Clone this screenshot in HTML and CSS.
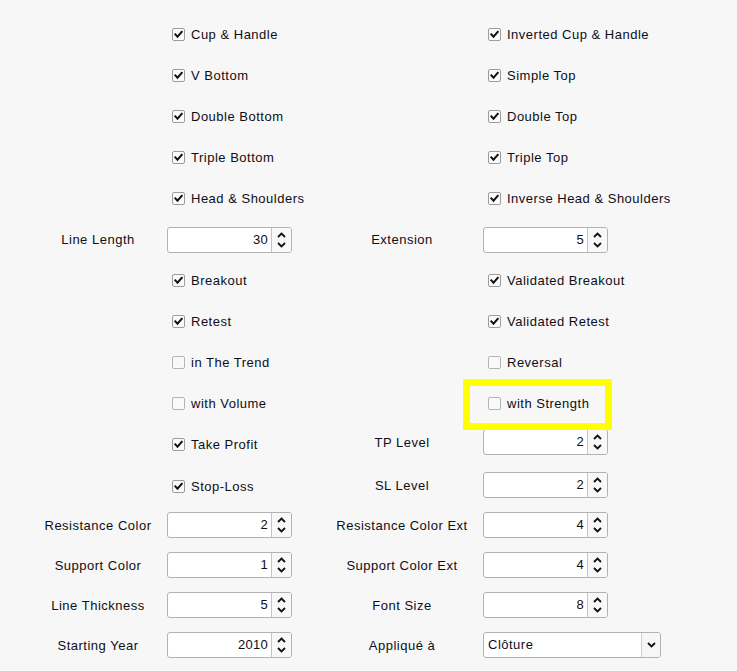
FILE: index.html
```html
<!DOCTYPE html>
<html lang="fr">
<head>
<meta charset="utf-8">
<title>Pattern settings</title>
<link rel="stylesheet" href="styles.css">
</head>
<body>
<svg width="0" height="0" class="defs">
  <defs>
    <symbol id="chk" viewBox="0 0 13 13"><path d="M2.8 6.4 L5.3 9.1 L10.3 3.4" fill="none" stroke="#111" stroke-width="2.4" stroke-linecap="square"/></symbol>
    <symbol id="up" viewBox="0 0 9 6"><path d="M1 5 L4.5 1.5 L8 5" fill="none" stroke="#111" stroke-width="1.8"/></symbol>
    <symbol id="down" viewBox="0 0 9 6"><path d="M1 1 L4.5 4.5 L8 1" fill="none" stroke="#111" stroke-width="1.8"/></symbol>
  </defs>
</svg>
<div class="form">
  <span></span><label class="cb"><span class="box"><svg><use href="#chk"/></svg></span>Cup &amp; Handle</label>
  <span></span><label class="cb"><span class="box"><svg><use href="#chk"/></svg></span>Inverted Cup &amp; Handle</label>

  <span></span><label class="cb"><span class="box"><svg><use href="#chk"/></svg></span>V Bottom</label>
  <span></span><label class="cb"><span class="box"><svg><use href="#chk"/></svg></span>Simple Top</label>

  <span></span><label class="cb"><span class="box"><svg><use href="#chk"/></svg></span>Double Bottom</label>
  <span></span><label class="cb"><span class="box"><svg><use href="#chk"/></svg></span>Double Top</label>

  <span></span><label class="cb"><span class="box"><svg><use href="#chk"/></svg></span>Triple Bottom</label>
  <span></span><label class="cb"><span class="box"><svg><use href="#chk"/></svg></span>Triple Top</label>

  <span></span><label class="cb"><span class="box"><svg><use href="#chk"/></svg></span>Head &amp; Shoulders</label>
  <span></span><label class="cb"><span class="box"><svg><use href="#chk"/></svg></span>Inverse Head &amp; Shoulders</label>

  <span class="lbl">Line Length</span>
  <div class="spin"><span class="val">30</span><span class="btns"><svg><use href="#up"/></svg><svg><use href="#down"/></svg></span></div>
  <span class="lbl">Extension</span>
  <div class="spin"><span class="val">5</span><span class="btns"><svg><use href="#up"/></svg><svg><use href="#down"/></svg></span></div>

  <span></span><label class="cb"><span class="box"><svg><use href="#chk"/></svg></span>Breakout</label>
  <span></span><label class="cb"><span class="box"><svg><use href="#chk"/></svg></span>Validated Breakout</label>

  <span></span><label class="cb"><span class="box"><svg><use href="#chk"/></svg></span>Retest</label>
  <span></span><label class="cb"><span class="box"><svg><use href="#chk"/></svg></span>Validated Retest</label>

  <span></span><label class="cb"><span class="box off"></span>in The Trend</label>
  <span></span><label class="cb"><span class="box off"></span>Reversal</label>

  <span></span><label class="cb"><span class="box off"></span>with Volume</label>
  <span></span><label class="cb hl"><span class="box off"></span>with Strength</label>

  <span></span><label class="cb"><span class="box"><svg><use href="#chk"/></svg></span>Take Profit</label>
  <span class="lbl raise">TP Level</span>
  <div class="spin raise"><span class="val">2</span><span class="btns"><svg><use href="#up"/></svg><svg><use href="#down"/></svg></span></div>

  <span></span><label class="cb sl"><span class="box"><svg><use href="#chk"/></svg></span>Stop-Loss</label>
  <span class="lbl">SL Level</span>
  <div class="spin"><span class="val">2</span><span class="btns"><svg><use href="#up"/></svg><svg><use href="#down"/></svg></span></div>

  <span class="lbl">Resistance Color</span>
  <div class="spin"><span class="val">2</span><span class="btns"><svg><use href="#up"/></svg><svg><use href="#down"/></svg></span></div>
  <span class="lbl">Resistance Color Ext</span>
  <div class="spin"><span class="val">4</span><span class="btns"><svg><use href="#up"/></svg><svg><use href="#down"/></svg></span></div>

  <span class="lbl">Support Color</span>
  <div class="spin"><span class="val">1</span><span class="btns"><svg><use href="#up"/></svg><svg><use href="#down"/></svg></span></div>
  <span class="lbl">Support Color Ext</span>
  <div class="spin"><span class="val">4</span><span class="btns"><svg><use href="#up"/></svg><svg><use href="#down"/></svg></span></div>

  <span class="lbl">Line Thickness</span>
  <div class="spin"><span class="val">5</span><span class="btns"><svg><use href="#up"/></svg><svg><use href="#down"/></svg></span></div>
  <span class="lbl">Font Size</span>
  <div class="spin"><span class="val">8</span><span class="btns"><svg><use href="#up"/></svg><svg><use href="#down"/></svg></span></div>

  <span class="lbl">Starting Year</span>
  <div class="spin"><span class="val">2010</span><span class="btns"><svg><use href="#up"/></svg><svg><use href="#down"/></svg></span></div>
  <span class="lbl">Appliqué à</span>
  <div class="select"><span class="sval">Clôture</span><span class="arrow"><svg><use href="#down"/></svg></span></div>
</div>
</body>
</html>
```
FILE: styles.css
```css
html, body {
  margin: 0;
  padding: 0;
  background: #f7f7f7;
}
body {
  font-family: "Liberation Sans", Arial, sans-serif;
  font-size: 13px;
  letter-spacing: 0.5px;
  color: #0e0e16;
  width: 737px;
  height: 671px;
  overflow: hidden;
}
.defs {
  position: absolute;
  width: 0;
  height: 0;
}
.form {
  display: grid;
  grid-template-columns: 138px 154px 162px 200px;
  grid-template-rows: repeat(11, 41px) repeat(5, 40px);
  padding: 14px 0 0 29px;
  align-items: center;
}
.cb {
  display: flex;
  align-items: center;
  gap: 6px;
  padding-left: 5px;
  position: relative;
  white-space: nowrap;
}
.cb.sl {
  margin-top: 3px;
}
.box {
  width: 11px;
  height: 11px;
  border: 1px solid #9c9c9c;
  border-radius: 2px;
  background: #fbfbfb;
  display: flex;
  flex: none;
}
.box svg {
  width: 11px;
  height: 11px;
}
.box.off {
  border-color: #b4b4b4;
  background: #f9f9f9;
}
.hl::after {
  content: "";
  position: absolute;
  left: -20px;
  top: calc(50% - 25px);
  width: 149px;
  height: 51px;
  box-sizing: border-box;
  border: 7px solid #ffff00;
}
.lbl {
  text-align: center;
  white-space: nowrap;
}
.raise {
  margin-bottom: 5px;
}
.spin {
  width: 125px;
  height: 26px;
  box-sizing: border-box;
  border: 1px solid #b2b2b2;
  border-radius: 3px;
  background: #fff;
  display: flex;
}
.val {
  flex: 1;
  text-align: right;
  padding-right: 3px;
  line-height: 24px;
  letter-spacing: 0.3px;
}
.btns {
  width: 19px;
  border-left: 1px solid #c4c4c4;
  background: #f8f8f8;
  border-radius: 0 2px 2px 0;
  display: flex;
  flex-direction: column;
  align-items: center;
  justify-content: center;
  gap: 4px;
}
.btns svg {
  width: 9px;
  height: 6px;
}
.select {
  width: 178px;
  height: 26px;
  box-sizing: border-box;
  border: 1px solid #b2b2b2;
  border-radius: 3px;
  background: #fff;
  display: flex;
}
.sval {
  flex: 1;
  padding-left: 4px;
  line-height: 24px;
}
.arrow {
  width: 18px;
  border-left: 1px solid #d0d0d0;
  background: #f6f6f6;
  display: flex;
  align-items: center;
  justify-content: center;
  border-radius: 0 2px 2px 0;
}
.arrow svg {
  width: 9px;
  height: 6px;
}
```
